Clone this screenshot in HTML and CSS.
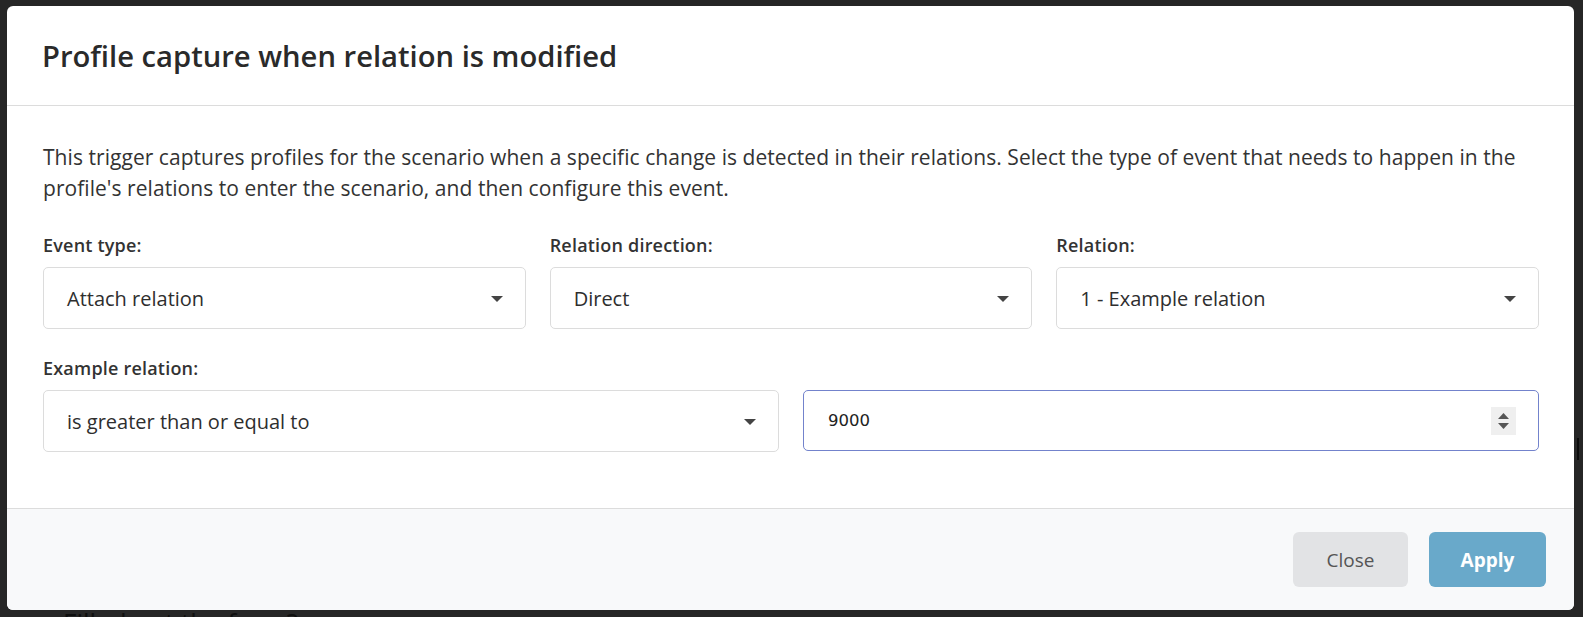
FILE: index.html
```html
<!DOCTYPE html>
<html lang="en">
<head>
<meta charset="utf-8">
<title>Profile capture when relation is modified</title>
<link rel="stylesheet" href="styles.css">
</head>
<body>
<div class="backdrop-text">Filled out the form?</div>
<div class="scroll-mark"></div>
<div class="modal">
  <div class="modal-header">
    <h1 class="modal-title">Profile capture when relation is modified</h1>
  </div>
  <div class="modal-body">
    <p class="intro">This trigger captures profiles for the scenario when a specific change is detected in their relations. Select the type of event that needs to happen in the profile's relations to enter the scenario, and then configure this event.</p>
    <div class="row row-3">
      <div class="field">
        <label class="field-label">Event type:</label>
        <div class="select"><span>Attach relation</span><span class="caret"></span></div>
      </div>
      <div class="field">
        <label class="field-label">Relation direction:</label>
        <div class="select"><span>Direct</span><span class="caret"></span></div>
      </div>
      <div class="field">
        <label class="field-label">Relation:</label>
        <div class="select"><span>1 - Example relation</span><span class="caret"></span></div>
      </div>
    </div>
    <label class="field-label label-row2">Example relation:</label>
    <div class="row row-2">
      <div class="select"><span>is greater than or equal to</span><span class="caret"></span></div>
      <div class="number-input">
        <span class="num-value">9000</span>
        <span class="spinner">
          <svg width="25" height="28" viewBox="0 0 25 28"><path d="M7 12 L12.5 6 L18 12 Z" fill="#555"/><path d="M7 16 L18 16 L12.5 22 Z" fill="#555"/></svg>
        </span>
      </div>
    </div>
  </div>
  <div class="modal-footer">
    <button class="btn btn-close">Close</button>
    <button class="btn btn-apply">Apply</button>
  </div>
</div>
</body>
</html>
```

FILE: styles.css
```css
html, body {
  margin: 0;
  padding: 0;
}
body {
  width: 1583px;
  height: 617px;
  overflow: hidden;
  background: #262626;
  font-family: "Open Sans", "Noto Sans", sans-serif;
  color: #333;
  position: relative;
}
.backdrop-text {
  position: absolute;
  left: 63px;
  top: 605px;
  font-size: 26px;
  line-height: 34px;
  color: #0e0e0e;
}
.scroll-mark {
  position: absolute;
  left: 1577px;
  top: 438px;
  width: 2px;
  height: 22px;
  background: #0a0a0a;
}
.modal {
  position: absolute;
  left: 7px;
  top: 6px;
  width: 1567px;
  height: 604px;
  background: #fff;
  border-radius: 6px;
  overflow: hidden;
  display: flex;
  flex-direction: column;
}
.modal-header {
  height: 99px;
  border-bottom: 1px solid #dcdcdc;
  display: flex;
  align-items: center;
  padding: 0 35px;
}
.modal-title {
  margin: 0;
  font-size: 29.2px;
  font-weight: 600;
  color: #2a2a2a;
}
.modal-body {
  padding: 36px 35px 0 36px;
  height: 366px;
  border-bottom: 1px solid #dcdcdc;
}
.intro {
  margin: 0 0 29px 0;
  font-size: 21px;
  line-height: 31px;
  color: #333;
  letter-spacing: 0.05px;
}
.row {
  display: grid;
  column-gap: 24px;
}
.row-3 {
  grid-template-columns: 1fr 1fr 1fr;
}
.row-2 {
  grid-template-columns: 1fr 1fr;
}
.field-label {
  display: block;
  font-size: 18px;
  line-height: 24px;
  font-weight: 600;
  color: #333;
  letter-spacing: 0.2px;
  margin-bottom: 10px;
}
.label-row2 {
  margin-top: 27px;
}
.select, .number-input {
  height: 62px;
  box-sizing: border-box;
  border: 1px solid #dcdcdc;
  border-radius: 5px;
  display: flex;
  align-items: center;
  justify-content: space-between;
  padding: 0 22px 0 23px;
  font-size: 20px;
  color: #2e2e2e;
}
.caret {
  width: 0;
  height: 0;
  border-left: 6px solid transparent;
  border-right: 6px solid transparent;
  border-top: 6px solid #444;
  margin-top: 1px;
}
.number-input {
  height: 61px;
  border-color: #7383cc;
  padding: 0 22px 0 24px;
}
.num-value {
  font-family: "DejaVu Sans", "Liberation Sans", sans-serif;
  font-size: 16.5px;
  color: #222;
}
.spinner {
  display: flex;
  align-items: center;
  justify-content: center;
  width: 25px;
  height: 28px;
  background: #efefef;
}
.spinner svg {
  display: block;
}
.modal-footer {
  flex: 1;
  background: #f8f9fa;
  display: flex;
  justify-content: flex-end;
  align-items: flex-start;
  gap: 21px;
  padding: 23px 28px 0 0;
}
.btn {
  height: 55px;
  border: none;
  border-radius: 6px;
  font-family: "Open Sans", "Noto Sans", sans-serif;
  font-size: 19px;
  cursor: pointer;
}
.btn-close {
  width: 115px;
  background: #e2e3e5;
  color: #555;
}
.btn-apply {
  width: 117px;
  background: #69a9ca;
  color: #fff;
  font-weight: 700;
}
```
